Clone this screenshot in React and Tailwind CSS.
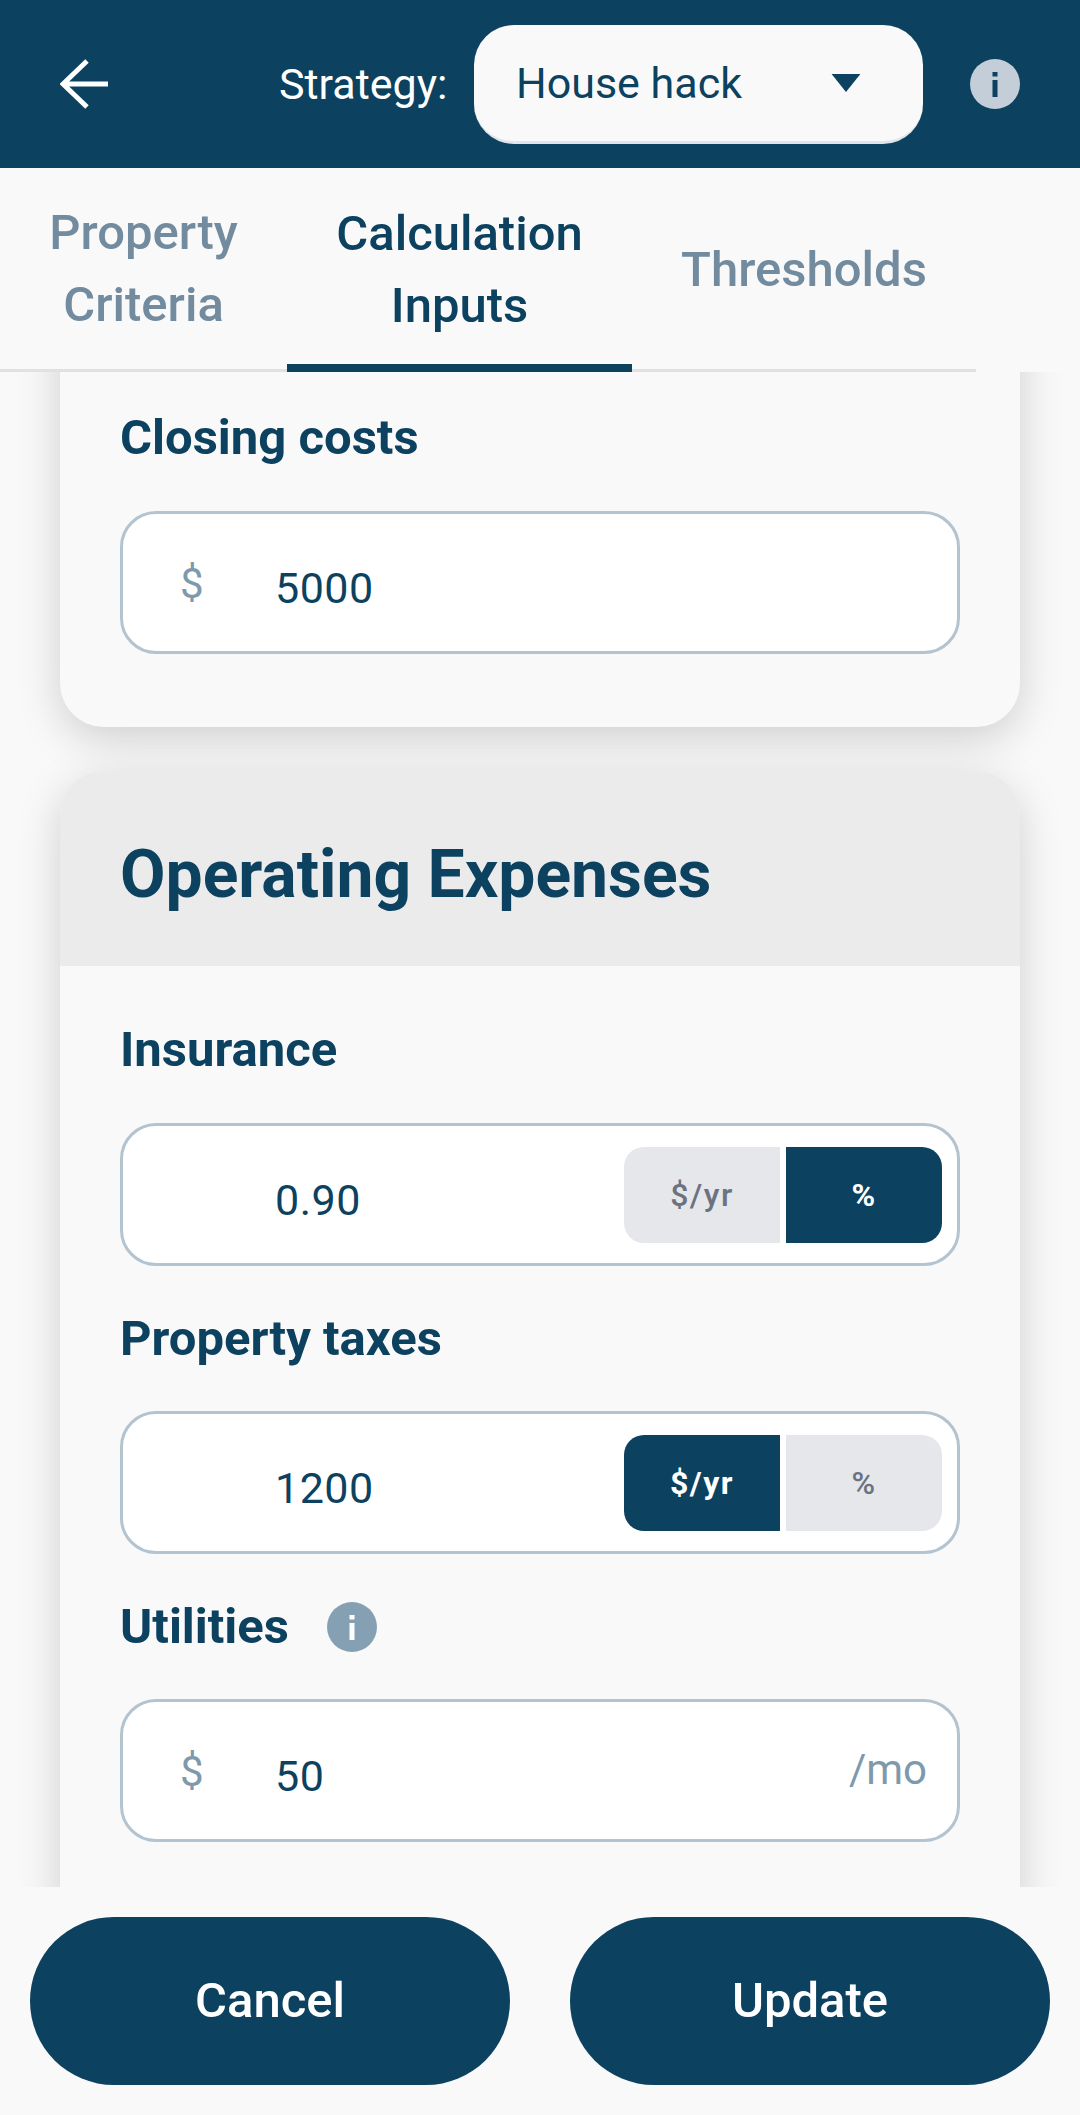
import React from 'react'

const navy = 'text-[#0c4160]'

function InfoDot({ className, dot }) {
    return (
        <svg viewBox="0 0 50 50" className={className}>
            <circle cx="25" cy="25" r="25" fill="currentColor" />
            <rect x="22.5" y="21" width="5" height="17" fill={dot} />
            <rect x="22.5" y="13" width="5" height="4.5" fill={dot} />
        </svg>
    )
}

function Label({ children }) {
    return <div className={`font-bold text-[49px] leading-[50px] ${navy}`}>{children}</div>
}

function Toggle({ active }) {
    const on = 'bg-[#0c4160] text-white font-bold'
    const off = 'bg-[#e5e7eb] text-[#6b7280] font-medium'
    return (
        <div className="flex gap-[6px] text-[32px] tracking-[1.5px]">
            <div className={`w-[156px] h-[96px] rounded-l-[20px] flex items-center justify-center ${active === 'yr' ? on : off}`}>$/yr</div>
            <div className={`w-[156px] h-[96px] rounded-r-[20px] flex items-center justify-center ${active === 'pct' ? on : off}`}>%</div>
        </div>
    )
}

function Field({ prefix, value, suffix, toggle }) {
    return (
        <div className="h-[143px] rounded-[36px] border-[3px] border-[#b3c3cf] bg-white flex items-center pl-[57px] pr-[15px]">
            <div className="w-[95px] text-[42px] text-[#7f99ac] mt-[2px] shrink-0">{prefix}</div>
            <div className={`flex-1 text-[43px] tracking-[0.5px] mt-[11px] ${navy}`}>{value}</div>
            {suffix && <div className="text-[42px] text-[#7f99ac] pr-[15px] -mt-[3px]">{suffix}</div>}
            {toggle && <Toggle active={toggle} />}
        </div>
    )
}

export default function App() {
    return (
        <div className="w-[1080px] h-screen flex flex-col bg-[#f9f9f9] overflow-hidden font-['Roboto',sans-serif]">

            {/* top bar */}
            <div className="h-[168px] shrink-0 bg-[#0c4160] flex items-center pl-[60px] pr-[32px]">
                <svg viewBox="0 0 48 50" fill="none" stroke="#ffffff" strokeWidth="5" className="w-[48px] h-[50px]">
                    <path d="M27 2 3 25l24 23M3 25h45" />
                </svg>
                <div className="ml-[171px] text-white text-[43px] w-[195px]">Strategy:</div>
                <div className={`w-[449px] h-[119px] rounded-[40px] bg-[#f9f9f9] border-b-[3px] border-[#dfe5ea] flex items-center justify-between pl-[42px] pr-[62px] text-[43px] ${navy}`}>
                    <span className="mt-[2px]">House hack</span>
                    <svg viewBox="0 0 32 20" className="w-[30px] h-[18px]"><path d="M0 0h32L16 20z" fill="#0c4160" /></svg>
                </div>
                <InfoDot className="w-[50px] h-[50px] ml-[47px] text-[#c3ced8]" dot="#0c4160" />
            </div>

            {/* tabs */}
            <div className="h-[204px] shrink-0 w-[976px] flex border-b-[3px] border-[#dfe1e3] text-[49px] leading-[72px] text-center font-medium text-[#738b9e] relative z-10">
                <div className="w-[287px] flex items-center justify-center pt-[1px]">Property<br />Criteria</div>
                <div className="w-[345px] flex items-center justify-center text-[#0c4160] border-b-[8px] border-[#0c4160] -mb-[3px] pt-[8px]">Calculation<br />Inputs</div>
                <div className="w-[344px] flex items-center justify-center pt-[2px]">Thresholds</div>
            </div>

            {/* scrolling form */}
            <div className="flex-1 min-h-0 overflow-hidden px-[60px]">
                <div className="-mt-[101px] flex flex-col gap-[44px]">
                    <div className="rounded-[44px] bg-[#f9f9f9] shadow-[0_12px_44px_rgba(0,0,0,0.17)] px-[60px] pt-[142px] pb-[73px]">
                        <Label>Closing costs</Label>
                        <div className="mt-[48px]"><Field prefix="$" value="5000" /></div>
                    </div>

                    <div className="rounded-[44px] bg-[#f9f9f9] shadow-[0_12px_44px_rgba(0,0,0,0.17)]">
                        <div className={`h-[195px] rounded-t-[44px] bg-[#ebebeb] px-[60px] pt-[12px] flex items-center font-bold text-[66px] ${navy}`}>Operating Expenses</div>
                        <div className="px-[60px] pt-[59px] pb-[140px] flex flex-col">
                            <Label>Insurance</Label>
                            <div className="mt-[48px]"><Field value="0.90" toggle="pct" /></div>
                            <div className="mt-[48px]"><Label>Property taxes</Label></div>
                            <div className="mt-[47px]"><Field value="1200" toggle="yr" /></div>
                            <div className="mt-[48px] flex items-center gap-[38px]">
                                <Label>Utilities</Label>
                                <InfoDot className="w-[50px] h-[50px] text-[#85a0b3]" dot="#ffffff" />
                            </div>
                            <div className="mt-[47px]"><Field prefix="$" value="50" suffix="/mo" /></div>
                        </div>
                    </div>
                </div>
            </div>

            {/* footer buttons */}
            <div className="h-[228px] shrink-0 bg-[#f9f9f9] px-[30px] pt-[30px] flex gap-[60px] relative">
                <button className="w-[480px] h-[168px] rounded-full bg-[#0c4160] text-white font-medium text-[49px]">Cancel</button>
                <button className="w-[480px] h-[168px] rounded-full bg-[#0c4160] text-white font-medium text-[49px]">Update</button>
            </div>
        </div>
    )
}
